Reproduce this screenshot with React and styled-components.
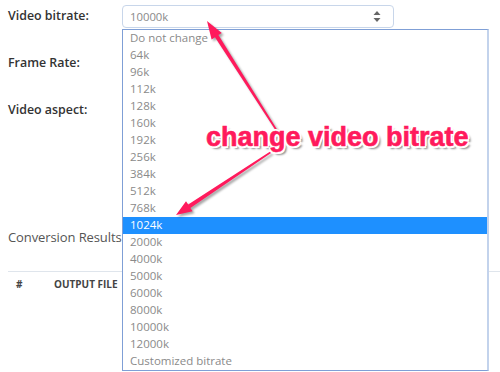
import React from 'react';
import styled, { createGlobalStyle } from 'styled-components';

const GlobalStyle = createGlobalStyle`
  html, body { margin: 0; padding: 0; background: #fff; }
  body { font-family: "Open Sans", "Liberation Sans", sans-serif; }
`;

const Page = styled.div`
  position: relative;
  width: 500px;
  height: 372px;
  overflow: hidden;
  padding: 5px 0 0 8px;
  box-sizing: border-box;
`;

const Form = styled.div`
  display: flex;
  flex-direction: column;
  gap: 24px;
`;

const Row = styled.div`
  display: grid;
  grid-template-columns: 114px 272px;
  align-items: center;
  height: 23px;
`;

const Label = styled.span`
  font-size: 12.4px;
  font-weight: 600;
  color: #333;
  padding-bottom: 3px;
`;

const Select = styled.div`
  height: 23px;
  box-sizing: border-box;
  border: 1px solid #c8d6ea;
  border-radius: 4px;
  display: flex;
  align-items: center;
  justify-content: space-between;
  padding: 0 12px 0 7px;
  font-size: 11.3px;
  color: #8a8a8a;
`;

const Results = styled.section`
  margin-top: 105px;
`;

const Heading = styled.h3`
  margin: 0;
  font-size: 13px;
  font-weight: 400;
  line-height: 20px;
  letter-spacing: -0.1px;
  color: #555;
`;

const Table = styled.div`
  margin-top: 24px;
  border-top: 1px solid #dfe5ec;
  padding: 5px 0 0 8px;
`;

const HeadRow = styled.div`
  display: grid;
  grid-template-columns: 38px 1fr;
  font-size: 10px;
  line-height: 14px;
  font-weight: 700;
  color: #444;
`;

const List = styled.ul`
  position: absolute;
  left: 122px;
  top: 29px;
  width: 367px;
  margin: 0;
  padding: 0;
  list-style: none;
  box-sizing: border-box;
  background: #fff;
  border: 1px solid #7f9fd6;
  border-right: 2px solid #c3d3ec;
`;

const Option = styled.li`
  height: 17px;
  line-height: 16px;
  padding-left: 7px;
  font-size: 11.5px;
  color: ${p => (p.$active ? '#fff' : '#8a8a8a')};
  background: ${p => (p.$active ? '#1e90ff' : 'transparent')};
`;

const Arrows = styled.svg`
  position: absolute;
  left: 0;
  top: 0;
  width: 500px;
  height: 372px;
  filter: drop-shadow(2px 2px 1px rgba(0, 0, 0, 0.35));
`;

const Callout = styled.div`
  position: absolute;
  left: 206px;
  top: 124px;
  font-family: "Liberation Sans", Arial, sans-serif;
  font-size: 27px;
  line-height: 27px;
  font-weight: 700;
  white-space: nowrap;
  color: #ff1a5c;
  -webkit-text-stroke: 0.6px #ff1a5c;
  text-shadow:
    -2px 0 0 #fff, 2px 0 0 #fff, 0 -2px 0 #fff, 0 2px 0 #fff,
    -1.5px -1.5px 0 #fff, 1.5px -1.5px 0 #fff, -1.5px 1.5px 0 #fff, 1.5px 1.5px 0 #fff,
    3px 3px 2px rgba(0, 0, 0, 0.45);
`;

const SortIcon = () => (
  <svg width="8" height="11" viewBox="0 0 8 11">
    <path d="M4 0 L7.5 4 H0.5 Z" fill="#666" />
    <path d="M4 11 L7.5 7 H0.5 Z" fill="#666" />
  </svg>
);

const bitrates = [
  'Do not change', '64k', '96k', '112k', '128k', '160k', '192k', '256k', '384k',
  '512k', '768k', '1024k', '2000k', '4000k', '5000k', '6000k', '8000k', '10000k',
  '12000k', 'Customized bitrate',
];

export default function App() {
  return (
    <>
      <GlobalStyle />
      <Page>
        <Form>
          <Row>
            <Label>Video bitrate:</Label>
            <Select>10000k<SortIcon /></Select>
          </Row>
          <Row>
            <Label>Frame Rate:</Label>
            <Select />
          </Row>
          <Row>
            <Label>Video aspect:</Label>
            <Select />
          </Row>
        </Form>

        <Results>
          <Heading>Conversion Results</Heading>
          <Table>
            <HeadRow>
              <span>#</span>
              <span>OUTPUT FILE</span>
            </HeadRow>
          </Table>
        </Results>

        <List>
          {bitrates.map(b => (
            <Option key={b} $active={b === '1024k'}>{b}</Option>
          ))}
        </List>

        <Arrows viewBox="0 0 500 372">
          <polygon
            fill="#ff1a5c"
            points="207,21 221.8,33 218.4,35.1 277.7,130.6 276.3,131.4 215,37.3 211.6,39.4"
          />
          <polygon
            fill="#ff1a5c"
            points="176,215 192.6,211.2 190.4,207.9 271.4,152.7 270.6,151.3 188.2,204.5 186,201.2"
          />
        </Arrows>
        <Callout>change video bitrate</Callout>
      </Page>
    </>
  );
}
